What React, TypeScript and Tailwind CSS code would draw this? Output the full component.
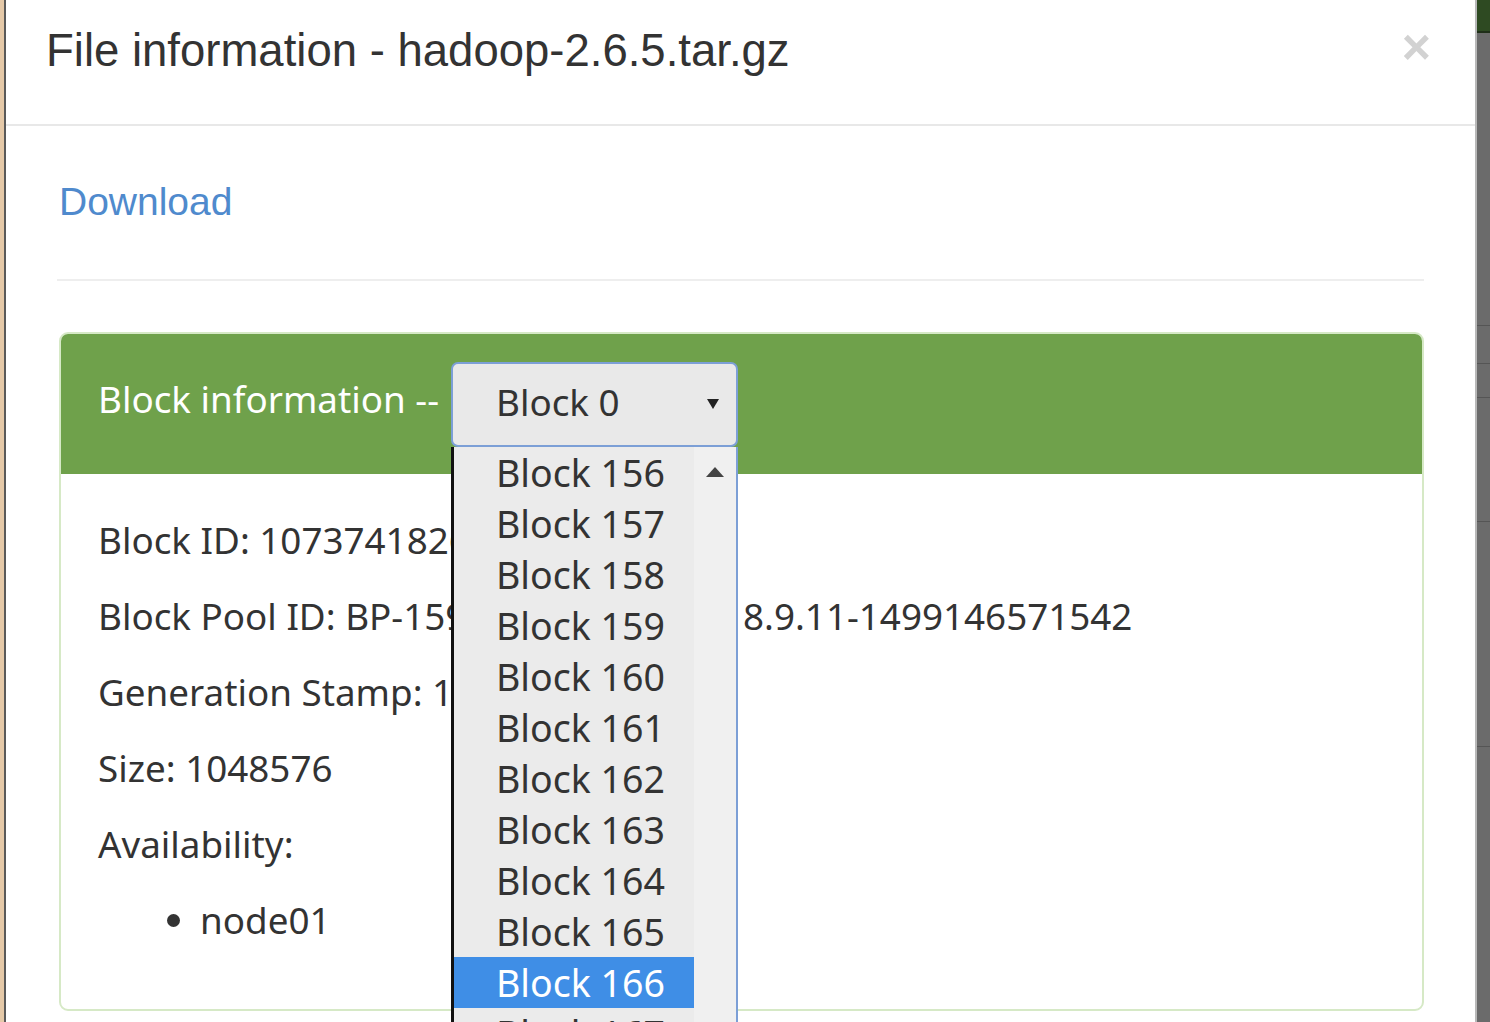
import React from 'react';

const blocks = [156, 157, 158, 159, 160, 161, 162, 163, 164, 165, 166, 167, 168];

const BlockDropdown: React.FC = () => (
  <div className="absolute left-0 top-[85px] z-20 w-[287px] h-[640px] flex bg-[#ebebeb] border-l-[3px] border-l-[#111] border-r-2 border-r-[#7c9fd6]">
    <ul className="flex-1">
      {blocks.map((b) => (
        <li
          key={b}
          className={`h-[51px] leading-[51px] pl-[42px] text-[37.5px] ${b === 166 ? 'bg-[#3f8ee6] text-white' : 'text-[#333]'}`}
        >
          Block {b}
        </li>
      ))}
    </ul>
    {/* scrollbar */}
    <div className="w-[42px] bg-[#f0f0f0] flex justify-center pt-[19px]">
      <svg width="20" height="12" viewBox="0 0 20 12">
        <path d="M10 1 L19 11 L1 11 Z" fill="#444" />
      </svg>
    </div>
  </div>
);

export default function App() {
  return (
    <div className="w-[1490px] h-[1022px] overflow-hidden flex bg-white" style={{ fontFamily: '"Noto Sans", sans-serif' }}>
      {/* backdrop edge left */}
      <div className="w-[4px] bg-[#e5c9a8]" />
      <div className="w-[2px] bg-[#5a5a5a]" />

      {/* modal */}
      <div className="flex-1 flex flex-col bg-white">
        <div className="h-[126px] border-b-2 border-[#e8e8e8] flex items-start justify-between pl-[40px] pr-[44px] pt-[23px]">
          <h4 className="text-[45.5px] leading-[56px] text-[#333]" style={{ fontFamily: '"Liberation Sans", Arial, sans-serif' }}>
            File information - hadoop-2.6.5.tar.gz
          </h4>
          <button className="text-[50px] leading-[44px] font-bold text-[#d2d2d2] mt-[2px]" style={{ fontFamily: '"Liberation Sans", Arial, sans-serif' }}>
            ×
          </button>
        </div>

        <div className="px-[51px] pt-[51px]">
          <a className="block pl-[2px] text-[39px] leading-[50px] text-[#4f8acd]" style={{ fontFamily: '"Liberation Sans", Arial, sans-serif' }}>
            Download
          </a>
          <hr className="mt-[52px] border-t-2 border-[#eeeeee]" />

          {/* panel */}
          <div className="mt-[51px] ml-[2px] rounded-[9px] border-2 border-[#d6e9c6]">
            <div className="bg-[#6fa14b] rounded-t-[7px] h-[140px] flex items-center pl-[37px] gap-[12px]">
              <span className="text-[36.8px] text-white mb-[8px]">Block information --</span>
              <div className="relative">
                <div className="w-[287px] h-[85px] rounded-[7px] border-2 border-[#7c9fd6] bg-[#e9e9e9] flex items-center justify-between pl-[43px] pr-[16px]">
                  <span className="text-[36.8px] text-[#333] mb-[2px]">Block 0</span>
                  <svg width="14" height="12" viewBox="0 0 14 12">
                    <path d="M1 1 L13 1 L7 11 Z" fill="#222" />
                  </svg>
                </div>
                <BlockDropdown />
              </div>
            </div>
            <div className="pt-[41px] pb-[38px] pl-[37px] text-[36.8px] leading-[51px] text-[#333]">
              <p className="mb-[25px]">Block ID: 1073741826</p>
              <p className="mb-[25px]">
                Block Pool ID: BP-15<span className="tracking-[0.16px]">96329014-192.11</span>8.9.11-1499146571542
              </p>
              <p className="mb-[25px]">Generation Stamp: 1002</p>
              <p className="mb-[25px]">Size: 1048576</p>
              <p className="mb-[25px]">Availability:</p>
              <ul className="list-disc pl-[102px] mb-[25px]">
                <li>node01</li>
              </ul>
            </div>
          </div>
        </div>
      </div>

      {/* backdrop edge right */}
      <div className="w-[15px] flex flex-col border-l-2 border-[#b8b8b8] bg-[#6b6b6b]">
        <div className="h-[33px] bg-[#2e4a22] border-b-2 border-[#1f2f18]" />
        <div className="h-[292px]" />
        <div className="h-[38px] border-t border-[#555]" />
        <div className="h-[34px] border-t border-[#555]" />
        <div className="h-[124px] border-t border-[#555]" />
        <div className="h-[225px] border-t border-[#555]" />
        <div className="flex-1 border-t border-[#555]" />
      </div>
    </div>
  );
}
